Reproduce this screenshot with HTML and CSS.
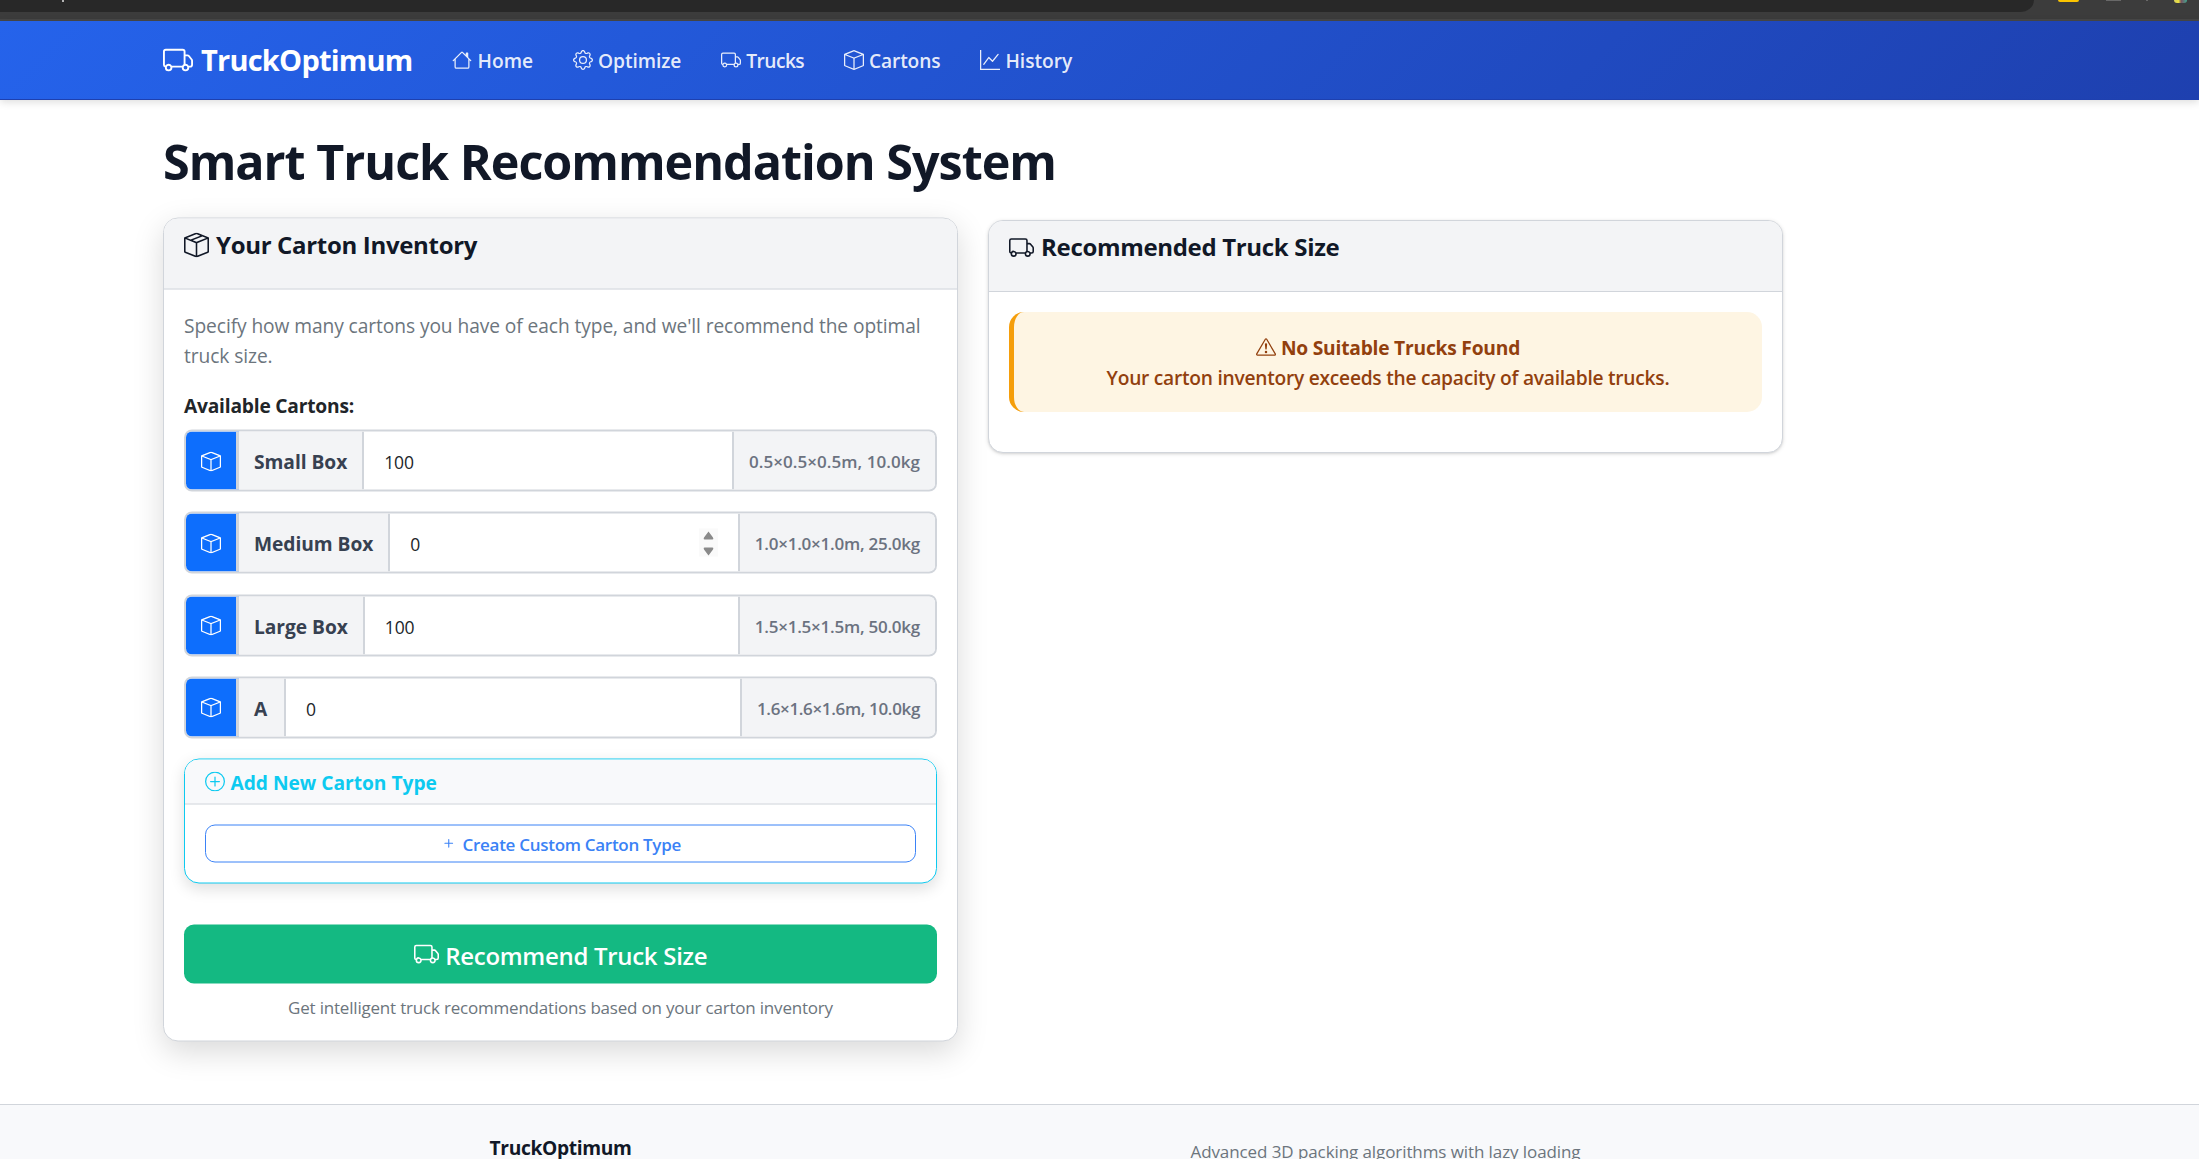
FILE: index.html
```html
<!DOCTYPE html>
<html lang="en">
<head>
<meta charset="utf-8">
<title>TruckOptimum</title>
<link rel="stylesheet" href="styles.css">
</head>
<body>
<svg class="sprite" aria-hidden="true">
  <symbol id="truck" viewBox="0 0 16 16"><path d="M0 3.5A1.5 1.5 0 0 1 1.5 2h9A1.5 1.5 0 0 1 12 3.5V5h1.02a1.5 1.5 0 0 1 1.17.563l1.481 1.85a1.5 1.5 0 0 1 .329.938V10.5a1.5 1.5 0 0 1-1.5 1.5H14a2 2 0 1 1-4 0H5a2 2 0 1 1-3.998-.085A1.5 1.5 0 0 1 0 10.5zm1.294 7.456A2 2 0 0 1 4.732 11h5.536a2 2 0 0 1 .732-.732V3.5a.5.5 0 0 0-.5-.5h-9a.5.5 0 0 0-.5.5v7a.5.5 0 0 0 .294.456M12 10a2 2 0 0 1 1.732 1h.768a.5.5 0 0 0 .5-.5V8.35a.5.5 0 0 0-.11-.312l-1.48-1.85A.5.5 0 0 0 13.02 6H12zm-9 1a1 1 0 1 0 0 2 1 1 0 0 0 0-2m9 0a1 1 0 1 0 0 2 1 1 0 0 0 0-2"/></symbol>
  <symbol id="house" viewBox="0 0 16 16"><path d="M8.707 1.5a1 1 0 0 0-1.414 0L.646 8.146a.5.5 0 0 0 .708.708L2 8.207V13.5A1.5 1.5 0 0 0 3.5 15h9a1.5 1.5 0 0 0 1.5-1.5V8.207l.646.647a.5.5 0 0 0 .708-.708L13 5.793V2.5a.5.5 0 0 0-.5-.5h-1a.5.5 0 0 0-.5.5v1.293zM13 7.207V13.5a.5.5 0 0 1-.5.5h-9a.5.5 0 0 1-.5-.5V7.207l5-5z"/></symbol>
  <symbol id="gear" viewBox="0 0 16 16"><path d="M8 4.754a3.246 3.246 0 1 0 0 6.492 3.246 3.246 0 0 0 0-6.492M5.754 8a2.246 2.246 0 1 1 4.492 0 2.246 2.246 0 0 1-4.492 0"/><path d="M9.796 1.343c-.527-1.79-3.065-1.79-3.592 0l-.094.319a.873.873 0 0 1-1.255.52l-.292-.16c-1.64-.892-3.433.902-2.54 2.541l.159.292a.873.873 0 0 1-.52 1.255l-.319.094c-1.79.527-1.79 3.065 0 3.592l.319.094a.873.873 0 0 1 .52 1.255l-.16.292c-.892 1.64.901 3.434 2.541 2.54l.292-.159a.873.873 0 0 1 1.255.52l.094.319c.527 1.79 3.065 1.79 3.592 0l.094-.319a.873.873 0 0 1 1.255-.52l.292.16c1.64.893 3.434-.902 2.54-2.541l-.159-.292a.873.873 0 0 1 .52-1.255l.319-.094c1.79-.527 1.79-3.065 0-3.592l-.319-.094a.873.873 0 0 1-.52-1.255l.16-.292c.893-1.64-.902-3.433-2.541-2.54l-.292.159a.873.873 0 0 1-1.255-.52zm-2.633.283c.246-.835 1.428-.835 1.674 0l.094.319a1.873 1.873 0 0 0 2.693 1.115l.291-.16c.764-.415 1.6.42 1.184 1.185l-.159.292a1.873 1.873 0 0 0 1.116 2.692l.318.094c.835.246.835 1.428 0 1.674l-.319.094a1.873 1.873 0 0 0-1.115 2.693l.16.291c.415.764-.42 1.6-1.185 1.184l-.291-.159a1.873 1.873 0 0 0-2.693 1.116l-.094.318c-.246.835-1.428.835-1.674 0l-.094-.319a1.873 1.873 0 0 0-2.692-1.115l-.292.16c-.764.415-1.6-.42-1.184-1.185l.159-.291A1.873 1.873 0 0 0 1.945 8.93l-.319-.094c-.835-.246-.835-1.428 0-1.674l.319-.094A1.873 1.873 0 0 0 3.06 4.377l-.16-.292c-.415-.764.42-1.6 1.185-1.184l.292.159a1.873 1.873 0 0 0 2.692-1.115z"/></symbol>
  <symbol id="box" viewBox="0 0 16 16"><path d="M8.186 1.113a.5.5 0 0 0-.372 0L1.846 3.5 8 5.961 14.154 3.5zM15 4.239l-6.5 2.6v7.922l6.5-2.6V4.24zM7.5 14.762V6.838L1 4.239v7.923zM7.443.184a1.5 1.5 0 0 1 1.114 0l7.129 2.852A.5.5 0 0 1 16 3.5v8.662a1 1 0 0 1-.629.928l-7.185 2.874a.5.5 0 0 1-.372 0L.63 13.09a1 1 0 0 1-.63-.928V3.5a.5.5 0 0 1 .314-.464z"/></symbol>
  <symbol id="box-seam" viewBox="0 0 16 16"><path d="M8.186 1.113a.5.5 0 0 0-.372 0L1.846 3.5l2.404.961L10.404 2zm3.564 1.426L5.596 5 8 5.961 14.154 3.5zm3.25 1.7-6.5 2.6v7.922l6.5-2.6V4.24zM7.5 14.762V6.838L1 4.239v7.923zM7.443.184a1.5 1.5 0 0 1 1.114 0l7.129 2.852A.5.5 0 0 1 16 3.5v8.662a1 1 0 0 1-.629.928l-7.185 2.874a.5.5 0 0 1-.372 0L.63 13.09a1 1 0 0 1-.63-.928V3.5a.5.5 0 0 1 .314-.464z"/></symbol>
  <symbol id="graph" viewBox="0 0 16 16"><path fill-rule="evenodd" d="M0 0h1v15h15v1H0zm14.817 3.113a.5.5 0 0 1 .07.704l-4.5 5.5a.5.5 0 0 1-.74.037L7.06 6.767l-3.656 5.027a.5.5 0 0 1-.808-.588l4-5.5a.5.5 0 0 1 .758-.06l2.609 2.61 4.15-5.073a.5.5 0 0 1 .704-.07"/></symbol>
  <symbol id="plus" viewBox="0 0 16 16"><path d="M8 4a.5.5 0 0 1 .5.5v3h3a.5.5 0 0 1 0 1h-3v3a.5.5 0 0 1-1 0v-3h-3a.5.5 0 0 1 0-1h3v-3A.5.5 0 0 1 8 4"/></symbol>
  <symbol id="plus-circle" viewBox="0 0 16 16"><path d="M8 15A7 7 0 1 1 8 1a7 7 0 0 1 0 14m0 1A8 8 0 1 0 8 0a8 8 0 0 0 0 16"/><path d="M8 4a.5.5 0 0 1 .5.5v3h3a.5.5 0 0 1 0 1h-3v3a.5.5 0 0 1-1 0v-3h-3a.5.5 0 0 1 0-1h3v-3A.5.5 0 0 1 8 4"/></symbol>
  <symbol id="warning" viewBox="0 0 16 16"><path d="M7.938 2.016A.13.13 0 0 1 8.002 2a.13.13 0 0 1 .063.016.15.15 0 0 1 .054.057l6.857 11.667c.036.06.035.124.002.183a.2.2 0 0 1-.054.06.1.1 0 0 1-.066.017H1.146a.1.1 0 0 1-.066-.017.2.2 0 0 1-.054-.06.18.18 0 0 1 .002-.183L7.884 2.073a.15.15 0 0 1 .054-.057m1.044-.45a1.13 1.13 0 0 0-1.96 0L.165 13.233c-.457.778.091 1.767.98 1.767h13.713c.889 0 1.438-.99.98-1.767z"/><path d="M7.002 12a1 1 0 1 1 2 0 1 1 0 0 1-2 0M7.1 5.995a.905.905 0 1 1 1.8 0l-.35 3.507a.552.552 0 0 1-1.1 0z"/></symbol>
</svg>

<div class="browser-bar">
  <div class="address"></div>
  <div class="url-tail"></div>
  <div class="ext ext-yellow"></div>
  <div class="ext ext-gray"></div>
  <div class="ext ext-divider"></div>
  <div class="ext ext-avatar"></div>
</div>

<nav class="navbar">
  <a class="brand"><svg class="icon"><use href="#truck"/></svg><span>TruckOptimum</span></a>
  <a class="link home"><svg class="icon"><use href="#house"/></svg><span>Home</span></a>
  <a class="link optimize"><svg class="icon"><use href="#gear"/></svg><span>Optimize</span></a>
  <a class="link trucks"><svg class="icon"><use href="#truck"/></svg><span>Trucks</span></a>
  <a class="link cartons"><svg class="icon"><use href="#box"/></svg><span>Cartons</span></a>
  <a class="link history"><svg class="icon"><use href="#graph"/></svg><span>History</span></a>
</nav>

<main>
  <h1>Smart Truck Recommendation System</h1>
  <div class="columns">
    <section class="card inventory">
      <h2 class="card-head"><svg class="icon"><use href="#box-seam"/></svg><span>Your Carton Inventory</span></h2>
      <div class="card-body">
        <p class="intro">Specify how many cartons you have of each type, and we'll recommend the optimal truck size.</p>
        <div class="label">Available Cartons:</div>
        <div class="group">
          <span class="type"><svg class="icon"><use href="#box"/></svg></span>
          <span class="name">Small Box</span>
          <span class="count">100</span>
          <span class="spec spec-wide">0.5×0.5×0.5m, 10.0kg</span>
        </div>
        <div class="group">
          <span class="type"><svg class="icon"><use href="#box"/></svg></span>
          <span class="name">Medium Box</span>
          <span class="count">0<svg class="spinner" viewBox="0 0 19 28"><path d="M9.5 3 L14 9 Q15 11 13.5 11 H5.5 Q4 11 5 9Z M9.5 27 L14 21 Q15 19 13.5 19 H5.5 Q4 19 5 21Z"/></svg></span>
          <span class="spec">1.0×1.0×1.0m, 25.0kg</span>
        </div>
        <div class="group">
          <span class="type"><svg class="icon"><use href="#box"/></svg></span>
          <span class="name">Large Box</span>
          <span class="count">100</span>
          <span class="spec">1.5×1.5×1.5m, 50.0kg</span>
        </div>
        <div class="group">
          <span class="type"><svg class="icon"><use href="#box"/></svg></span>
          <span class="name">A</span>
          <span class="count">0</span>
          <span class="spec spec-narrow">1.6×1.6×1.6m, 10.0kg</span>
        </div>
        <div class="add-card">
          <h3><svg class="icon"><use href="#plus-circle"/></svg><span>Add New Carton Type</span></h3>
          <div class="add-body">
            <button class="create"><svg class="icon"><use href="#plus"/></svg><span>Create Custom Carton Type</span></button>
          </div>
        </div>
        <button class="recommend"><svg class="icon"><use href="#truck"/></svg><span>Recommend Truck Size</span></button>
        <div class="hint">Get intelligent truck recommendations based on your carton inventory</div>
      </div>
    </section>

    <section class="card result">
      <h2 class="card-head"><svg class="icon"><use href="#truck"/></svg><span>Recommended Truck Size</span></h2>
      <div class="card-body">
        <div class="alert">
          <div class="alert-title"><svg class="icon"><use href="#warning"/></svg><span>No Suitable Trucks Found</span></div>
          <div class="alert-text">Your carton inventory exceeds the capacity of available trucks.</div>
        </div>
      </div>
    </section>
  </div>
</main>

<footer>
  <div class="foot-name">TruckOptimum</div>
  <div class="foot-note">Advanced 3D packing algorithms with lazy loading</div>
</footer>
</body>
</html>
```
FILE: styles.css
```css
* { box-sizing: border-box; }
body {
  margin: 0;
  height: 1159px;
  overflow: hidden;
  background: #fff;
  color: #212529;
  font: 400 19.2px/30px "Open Sans", "Noto Sans", sans-serif;
  white-space: nowrap;
}
h1, h2, h3, p { margin: 0; }
button { font-family: inherit; }
.sprite { display: none; }
.icon { display: block; flex: none; width: 20px; height: 20px; fill: currentColor; }

/* browser chrome strip */
.browser-bar {
  position: relative;
  height: 21px;
  background: #3c3c3c;
  border-bottom: 2px solid #474747;
  overflow: hidden;
}
.address { width: 2034px; height: 12px; background: #282828; border-bottom-right-radius: 20px 17px; }
.url-tail { position: absolute; left: 62px; top: 0; width: 2px; height: 2px; background: #b5b5b5; }
.ext { position: absolute; top: 0; }
.ext-yellow { left: 2058px; width: 21px; height: 2px; background: #fbc400; border-radius: 0 0 2px 2px; }
.ext-gray { left: 2106px; width: 15px; height: 1px; background: #686868; }
.ext-divider { left: 2146px; width: 2px; height: 1px; background: #686868; }
.ext-avatar {
  left: 2174px; width: 13px; height: 3px;
  border-radius: 0 0 7px 7px;
  background: linear-gradient(90deg, #d8d060, #e8e040 35%, #7a5060 55%, #40a890);
}

.navbar {
  position: relative;
  display: flex;
  align-items: center;
  gap: 39.5px;
  height: 79px;
  padding: 0 0 1px 163px;
  background: linear-gradient(135deg, #2563eb 0%, #1e40af 100%);
  border-bottom: 1px solid #1e40af;
  box-shadow: 0 2px 8px rgba(0, 0, 0, .14);
  color: rgba(255, 255, 255, .9);
}
.brand, .link { display: flex; align-items: center; }
.brand { gap: 8px; color: #fff; font-size: 29px; font-weight: 700; letter-spacing: -.0265em; }
.brand .icon { width: 30px; height: 30px; }
.link { gap: 5.5px; font-weight: 600; }
.link span { padding-top: 2px; }
.home { letter-spacing: 0; }
.optimize { letter-spacing: -.004em; }
.trucks { letter-spacing: -.03em; }
.cartons { letter-spacing: -.008em; }
.history { letter-spacing: 0; }

main { padding: 31px 0 60px 163px; }
h1 {
  color: #111827;
  font-size: 48.5px;
  line-height: 60px;
  font-weight: 700;
  letter-spacing: -.0209em;
}
.columns {
  display: grid;
  grid-template-columns: 795px 795px;
  gap: 30px;
  align-items: start;
  margin-top: 29px;
}
.card { border: 1px solid #d1d5db; border-radius: 15px; background: #fff; overflow: hidden; }
.inventory { height: 824px; transform: translateY(-2.5px); box-shadow: 0 10px 31px rgba(0, 0, 0, .15); }
.result { height: 233px; box-shadow: 0 1px 4px rgba(0, 0, 0, .12), 0 1px 2px rgba(0, 0, 0, .08); }
.card-head {
  display: flex;
  align-items: flex-start;
  gap: 7px;
  height: 71px;
  padding: 11px 20px 0;
  background: #f3f4f6;
  border-bottom: 1px solid #d1d5db;
  color: #111827;
  font-size: 24px;
  font-weight: 700;
  letter-spacing: -.0135em;
}
.card-head .icon { width: 25px; height: 25px; margin-top: 2.5px; }
.card-body { padding: 20px; }
.intro { padding-top: 1px; color: #6c757d; letter-spacing: -.0045em; white-space: normal; }
.label { margin: 20px 0 9px; font-weight: 700; letter-spacing: -.0108em; }

.group {
  display: flex;
  height: 62px;
  margin-bottom: 20.3px;
  border: 2px solid #d1d5db;
  border-radius: 8px;
  overflow: hidden;
}
.group > span { display: flex; align-items: center; padding-top: 2px; }
.group .type { width: 53px; padding: 1px 0 0; justify-content: center; background: #0d6efd; border-right: 3px solid #d1d5db; color: #fff; }
.group .name {
  min-width: 47px;
  padding-left: 15px;
  padding-right: 15px;
  background: #f3f4f6;
  border-right: 2px solid #d1d5db;
  color: #374151;
  font-weight: 700;
  letter-spacing: -.002em;
}
.group .count { flex: 1; justify-content: space-between; padding-left: 20px; padding-right: 20px; font-size: 17.5px; letter-spacing: -.01em; }
.spinner { width: 19px; height: 28px; margin-bottom: 2px; background: #fafafa; fill: #8a8a8a; }
.group .spec {
  padding-left: 15px;
  padding-right: 15px;
  background: #f3f4f6;
  border-left: 2px solid #d1d5db;
  color: #6b7280;
  font-size: 17px;
  font-weight: 600;
  letter-spacing: -.014em;
}
.group .spec-wide { letter-spacing: .003em; }
.group .spec-narrow { letter-spacing: -.0205em; }

.add-card {
  border: 1px solid #0dcaf0;
  border-radius: 15px;
  background: #fff;
  box-shadow: 0 5px 15px rgba(0, 0, 0, .13);
  overflow: hidden;
}
.add-card h3 {
  display: flex;
  align-items: center;
  gap: 5.5px;
  height: 45px;
  padding: 0 20px;
  background: #f8f9fb;
  border-bottom: 1px solid #d1d5db;
  color: #0dcaf0;
  font-size: 19.2px;
  font-weight: 700;
  letter-spacing: -.001em;
}
.add-card h3 span { padding-top: 1.5px; }
.add-body { padding: 20px; }
.create {
  display: flex;
  align-items: center;
  justify-content: center;
  gap: 5px;
  width: 100%;
  height: 38px;
  border: 1px solid #3b82f6;
  border-radius: 10px;
  background: #fff;
  color: #3b82f6;
  font-size: 17px;
  font-weight: 600;
  letter-spacing: -.017em;
}
.create span { padding-top: 1px; }
.create .icon { width: 17.5px; height: 17.5px; }
.recommend {
  display: flex;
  align-items: center;
  justify-content: center;
  gap: 6.5px;
  width: 100%;
  height: 59px;
  margin-top: 40.5px;
  border: 0;
  border-radius: 10px;
  background: #14b982;
  color: #fff;
  font-size: 24px;
  font-weight: 600;
  letter-spacing: -.0125em;
}
.recommend .icon { width: 25px; height: 25px; margin-top: 1px; }
.recommend span { padding-top: 2px; }
.hint { margin-top: 11.5px; color: #6c757d; font-size: 17px; line-height: 26px; letter-spacing: -.0117em; text-align: center; }

.alert {
  height: 100px;
  padding: 21px 20px 0;
  border-left: 5px solid #f59e0b;
  border-radius: 15px;
  background: #fef5e3;
  color: #92400e;
  font-weight: 600;
  text-align: center;
}
.alert-title { display: flex; align-items: center; justify-content: center; gap: 5px; font-weight: 700; letter-spacing: -.011em; }
.alert-title .icon { margin-bottom: 2px; }
.alert-text { letter-spacing: -.0135em; }

footer {
  display: grid;
  grid-template-columns: 825px 825px;
  height: 55px;
  padding: 28px 0 0 148px;
  background: #f8f9fb;
  border-top: 1px solid #d1d5db;
  text-align: center;
}
.foot-name { color: #111827; font-weight: 700; letter-spacing: -.0185em; }
.foot-note { padding-top: 3.5px; color: #6c757d; font-size: 17px; letter-spacing: -.0052em; }
```
